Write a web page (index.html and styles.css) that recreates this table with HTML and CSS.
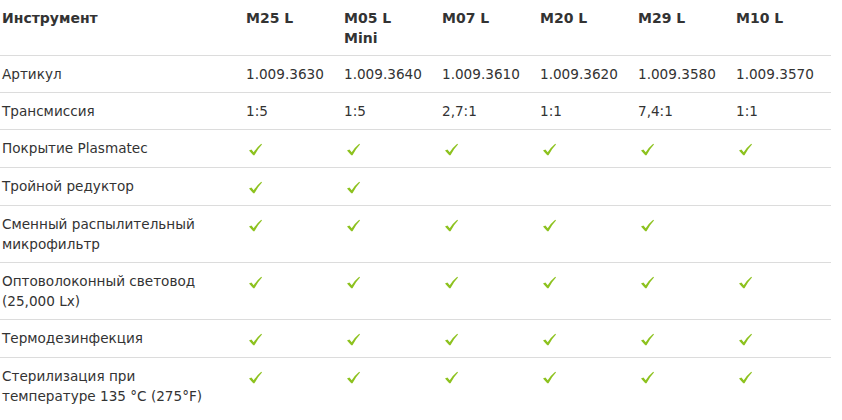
FILE: index.html
```html
<!DOCTYPE html>
<html lang="ru">
<head>
<meta charset="utf-8">
<link rel="stylesheet" href="styles.css">
</head>
<body>
<svg width="0" height="0" class="defs">
  <defs>
    <symbol id="chk" viewBox="0 0 14 13">
      <path d="M0 7.6 L2.6 6.4 L5.1 9.4 Q8.5 4.2 13.2 0.4 L14 1.2 Q9.6 5.6 5.9 12.8 L4.6 12.8 Z" fill="#8dc21f"/>
    </symbol>
  </defs>
</svg>
<table class="cmp">
  <colgroup>
    <col class="c-name"><col class="c-m"><col class="c-m"><col class="c-m"><col class="c-m"><col class="c-m"><col class="c-last">
  </colgroup>
  <thead>
    <tr>
      <th>Инструмент</th>
      <th>M25 L</th>
      <th>M05 L<br>Mini</th>
      <th>M07 L</th>
      <th>M20 L</th>
      <th>M29 L</th>
      <th>M10 L</th>
    </tr>
  </thead>
  <tbody>
    <tr>
      <td>Артикул</td>
      <td>1.009.3630</td><td>1.009.3640</td><td>1.009.3610</td><td>1.009.3620</td><td>1.009.3580</td><td>1.009.3570</td>
    </tr>
    <tr>
      <td>Трансмиссия</td>
      <td>1:5</td><td>1:5</td><td>2,7:1</td><td>1:1</td><td>7,4:1</td><td>1:1</td>
    </tr>
    <tr>
      <td>Покрытие Plasmatec</td>
      <td><svg class="ck"><use href="#chk"/></svg></td>
      <td><svg class="ck"><use href="#chk"/></svg></td>
      <td><svg class="ck"><use href="#chk"/></svg></td>
      <td><svg class="ck"><use href="#chk"/></svg></td>
      <td><svg class="ck"><use href="#chk"/></svg></td>
      <td><svg class="ck"><use href="#chk"/></svg></td>
    </tr>
    <tr>
      <td>Тройной редуктор</td>
      <td><svg class="ck"><use href="#chk"/></svg></td>
      <td><svg class="ck"><use href="#chk"/></svg></td>
      <td></td><td></td><td></td><td></td>
    </tr>
    <tr>
      <td>Сменный распылительный<br>микрофильтр</td>
      <td><svg class="ck"><use href="#chk"/></svg></td>
      <td><svg class="ck"><use href="#chk"/></svg></td>
      <td><svg class="ck"><use href="#chk"/></svg></td>
      <td><svg class="ck"><use href="#chk"/></svg></td>
      <td><svg class="ck"><use href="#chk"/></svg></td>
      <td></td>
    </tr>
    <tr>
      <td>Оптоволоконный световод<br>(25,000 Lx)</td>
      <td><svg class="ck"><use href="#chk"/></svg></td>
      <td><svg class="ck"><use href="#chk"/></svg></td>
      <td><svg class="ck"><use href="#chk"/></svg></td>
      <td><svg class="ck"><use href="#chk"/></svg></td>
      <td><svg class="ck"><use href="#chk"/></svg></td>
      <td><svg class="ck"><use href="#chk"/></svg></td>
    </tr>
    <tr>
      <td>Термодезинфекция</td>
      <td><svg class="ck"><use href="#chk"/></svg></td>
      <td><svg class="ck"><use href="#chk"/></svg></td>
      <td><svg class="ck"><use href="#chk"/></svg></td>
      <td><svg class="ck"><use href="#chk"/></svg></td>
      <td><svg class="ck"><use href="#chk"/></svg></td>
      <td><svg class="ck"><use href="#chk"/></svg></td>
    </tr>
    <tr class="last">
      <td>Стерилизация при<br>температуре 135 °C (275°F)</td>
      <td><svg class="ck"><use href="#chk"/></svg></td>
      <td><svg class="ck"><use href="#chk"/></svg></td>
      <td><svg class="ck"><use href="#chk"/></svg></td>
      <td><svg class="ck"><use href="#chk"/></svg></td>
      <td><svg class="ck"><use href="#chk"/></svg></td>
      <td><svg class="ck"><use href="#chk"/></svg></td>
    </tr>
  </tbody>
</table>
</body>
</html>
```

FILE: styles.css
```css
html, body {
  margin: 0;
  padding: 0;
  background: #fff;
}
.defs {
  position: absolute;
  width: 0;
  height: 0;
  overflow: hidden;
}
.cmp {
  width: 831px;
  border-collapse: collapse;
  table-layout: fixed;
  font-family: "DejaVu Sans", Verdana, sans-serif;
  font-size: 13.6px;
  line-height: 20px;
  color: #333;
}
.c-name { width: 244px; }
.c-m { width: 98px; }
.c-last { width: auto; }
.cmp th,
.cmp td {
  text-align: left;
  vertical-align: top;
  padding: 8px 2px 8px 2px;
  border-bottom: 1px solid #dcdcdc;
  white-space: nowrap;
}
.cmp th {
  font-weight: bold;
  font-size: 14px;
  padding-bottom: 7px;
}
.cmp tr.last td {
  border-bottom: none;
}
.ck {
  display: block;
  width: 13px;
  height: 13px;
  margin: 5px 0 3px 3px;
}
```
